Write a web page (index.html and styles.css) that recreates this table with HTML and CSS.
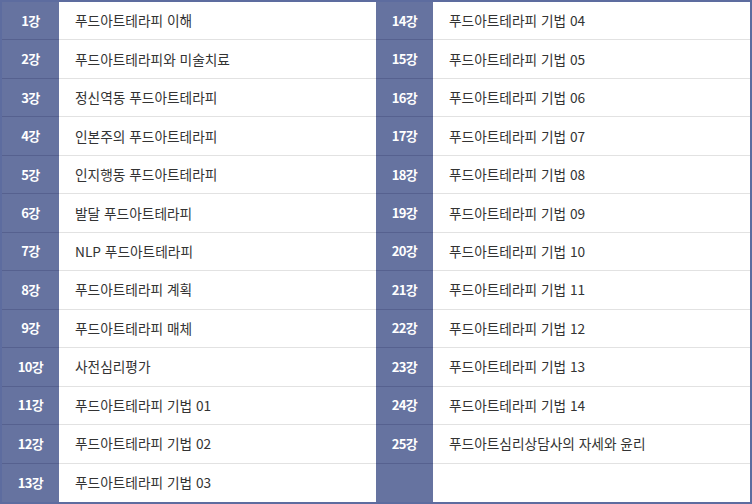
FILE: index.html
```html
<!DOCTYPE html>
<html lang="ko">
  <head>
    <meta charset="UTF-8" />
    <meta name="viewport" content="width=device-width, initial-scale=1.0" />
    <title>커리큘럼</title>
    <link rel="stylesheet" href="styles.css">
  </head>
  <body>
    <div class="curriculum">
      <div class="lesson-no">1강</div><div class="lesson-title">푸드아트테라피 이해</div>
      <div class="lesson-no">14강</div><div class="lesson-title">푸드아트테라피 기법 04</div>

      <div class="lesson-no">2강</div><div class="lesson-title">푸드아트테라피와 미술치료</div>
      <div class="lesson-no">15강</div><div class="lesson-title">푸드아트테라피 기법 05</div>

      <div class="lesson-no">3강</div><div class="lesson-title">정신역동 푸드아트테라피</div>
      <div class="lesson-no">16강</div><div class="lesson-title">푸드아트테라피 기법 06</div>

      <div class="lesson-no">4강</div><div class="lesson-title">인본주의 푸드아트테라피</div>
      <div class="lesson-no">17강</div><div class="lesson-title">푸드아트테라피 기법 07</div>

      <div class="lesson-no">5강</div><div class="lesson-title">인지행동 푸드아트테라피</div>
      <div class="lesson-no">18강</div><div class="lesson-title">푸드아트테라피 기법 08</div>

      <div class="lesson-no">6강</div><div class="lesson-title">발달 푸드아트테라피</div>
      <div class="lesson-no">19강</div><div class="lesson-title">푸드아트테라피 기법 09</div>

      <div class="lesson-no">7강</div><div class="lesson-title">NLP 푸드아트테라피</div>
      <div class="lesson-no">20강</div><div class="lesson-title">푸드아트테라피 기법 10</div>

      <div class="lesson-no">8강</div><div class="lesson-title">푸드아트테라피 계획</div>
      <div class="lesson-no">21강</div><div class="lesson-title">푸드아트테라피 기법 11</div>

      <div class="lesson-no">9강</div><div class="lesson-title">푸드아트테라피 매체</div>
      <div class="lesson-no">22강</div><div class="lesson-title">푸드아트테라피 기법 12</div>

      <div class="lesson-no">10강</div><div class="lesson-title">사전심리평가</div>
      <div class="lesson-no">23강</div><div class="lesson-title">푸드아트테라피 기법 13</div>

      <div class="lesson-no">11강</div><div class="lesson-title">푸드아트테라피 기법 01</div>
      <div class="lesson-no">24강</div><div class="lesson-title">푸드아트테라피 기법 14</div>

      <div class="lesson-no">12강</div><div class="lesson-title">푸드아트테라피 기법 02</div>
      <div class="lesson-no">25강</div><div class="lesson-title">푸드아트심리상담사의 자세와 윤리</div>

      <div class="lesson-no last">13강</div><div class="lesson-title last">푸드아트테라피 기법 03</div>
      <div class="lesson-no last"></div><div class="lesson-title last"></div>
    </div>
  </body>
</html>
```

FILE: styles.css
```css
body {
  margin: 0;
  background: #fff;
  font-family: "Noto Sans CJK KR", "Noto Sans", sans-serif;
}

/* lesson table */
.curriculum {
  width: 752px;
  height: 504px;
  box-sizing: border-box;
  border: 2px solid #5d6c9f;
  display: grid;
  grid-template-columns: 57px 1fr 57px 1fr;
  grid-template-rows: repeat(13, 1fr);
}

.lesson-no {
  display: flex;
  align-items: center;
  justify-content: center;
  padding-bottom: 1px;
  background-color: #6673a0;
  border-bottom: 1px solid #56618f;
  color: #fff;
  font-size: 13px;
  font-weight: bold;
  letter-spacing: -0.6px;
}

.lesson-title {
  display: flex;
  align-items: center;
  padding-left: 16px;
  padding-bottom: 1px;
  border-bottom: 1px solid #e2e2e2;
  color: #333;
  font-size: 13.7px;
}

.last {
  border-bottom: none;
}
```
